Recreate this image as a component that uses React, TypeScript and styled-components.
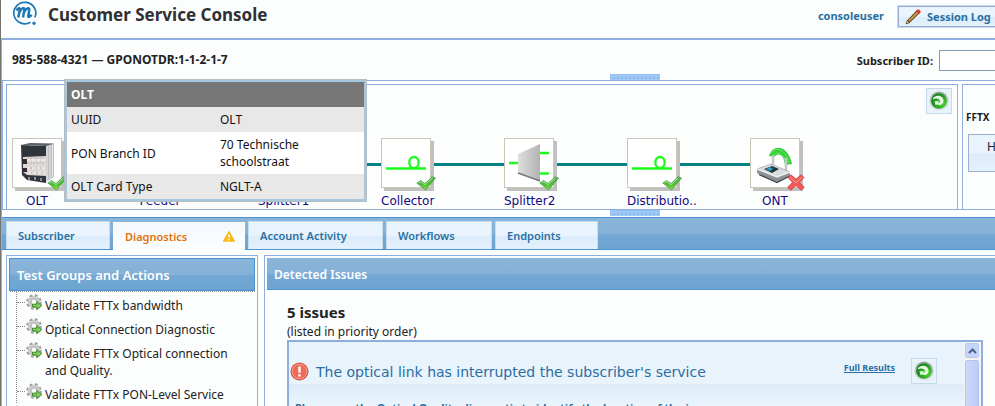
import React, { ReactNode } from "react";
import styled, { createGlobalStyle, css } from "styled-components";

const line = "#8eaee0";
const edge = "#4a94d4";
const ink = "#2a6fa3";
const ui = '"Noto Sans", "Open Sans", sans-serif';
const wide = '"DejaVu Sans", sans-serif';
const barFill = "linear-gradient(#8ab5da 0, #84b1d7 50%, #73a8d3 54%, #6ca3d0 100%)";
const buttonFill = "linear-gradient(#eaf4fd 0, #e8f3fd 50%, #dcecfa 54%, #e4f1fd 100%)";

const Global = createGlobalStyle`
  *, *::before, *::after { box-sizing: border-box; }
  body { margin: 0; overflow: hidden; background: #fcfefe; }
  button, input { font: inherit; }
  h1, h2, h3, p, ul { margin: 0; padding: 0; }
`;

const Page = styled.div`
  display: flex;
  flex-direction: column;
  height: 100vh;
  overflow: hidden;
  border-left: 1px solid #77746f;
  font-family: ${ui};
  font-size: 13px;
  line-height: 17px;
  color: #222;
`;

const Header = styled.header`
  display: flex;
  flex: none;
  align-items: flex-start;
  height: 40px;
  padding-left: 11px;
  border-bottom: 2px solid ${line};
  svg { flex: none; }
`;

const Title = styled.h1`
  flex: 1;
  margin-left: 11px;
  font-size: 17px;
  line-height: 30px;
  color: #303033;
`;

const User = styled.a`
  margin-right: 14px;
  font-size: 11px;
  font-weight: 700;
  line-height: 32px;
  color: ${ink};
  text-decoration: none;
`;

const SessionButton = styled.button`
  display: flex;
  flex: none;
  align-items: center;
  gap: 6px;
  width: 104px;
  height: 21px;
  margin: 6px -7px 0 0;
  padding: 0 6px;
  border: 1px solid #9aa8d0;
  outline: 1px solid #c5dcee;
  background: ${buttonFill};
  font-size: 11px;
  font-weight: 700;
  color: ${ink};
  white-space: nowrap;
`;

const Workspace = styled.div`
  display: flex;
  flex: 1;
  flex-direction: column;
  min-height: 0;
  border-left: 1px solid ${line};
`;

const SubjectBar = styled.div`
  position: relative;
  display: flex;
  flex: none;
  align-items: center;
  height: 41px;
  padding-left: 10px;
  border-bottom: 1px solid ${line};
`;

const Subject = styled.h2`
  flex: 1;
  font-size: 12px;
  line-height: 40px;
`;

const SearchLabel = styled.label`
  display: flex;
  align-items: center;
  gap: 6px;
  margin-right: -6px;
  font-size: 11px;
  font-weight: 700;
`;

const SearchInput = styled.input`
  width: 62px;
  height: 21px;
  border: 1px solid #7f9db9;
  background: #fff;
`;

const Grip = styled.span`
  width: 50px;
  height: 6px;
  background-color: #94c0f6;
  background-image: radial-gradient(#a9d2fb 1px, transparent 1px);
  background-size: 4px 4px;
`;

const TopGrip = styled(Grip)`
  position: absolute;
  bottom: 0;
  left: 608px;
`;

const GripRow = styled.div`
  display: flex;
  flex: none;
  height: 7px;
  padding-left: 608px;
`;

const TopologyRow = styled.div`
  display: grid;
  flex: none;
  grid-template-columns: minmax(0, 1fr) 33px;
  gap: 4px;
  height: 129px;
  padding: 3px 0 0 3px;
  border-left: 1px solid ${line};
  border-bottom: 1px solid ${line};
`;

const Topology = styled.section`
  position: relative;
  padding: 53px 0 0 5px;
  border: 1px solid ${line};
  border-bottom: 0;
`;

const Chain = styled.div`
  display: flex;
  width: 791px;
`;

const Node = styled.figure<{ $last?: boolean }>`
  position: relative;
  flex: ${(p) => (p.$last ? "none" : "1 1 0")};
  width: 53px;
  margin: 0;
  ${(p) =>
    !p.$last &&
    css`
      &::before {
        content: "";
        position: absolute;
        top: 25px;
        right: 0;
        left: 50px;
        height: 3px;
        background: #048284;
      }
    `}
`;

const Tile = styled.div`
  position: relative;
  width: 50px;
  height: 50px;
  border: 1px solid #c9c8b8;
  background: #fff;
  box-shadow: 3px 3px 0 #c0c0c0;
`;

const Badge = styled.span`
  position: absolute;
  right: -6px;
  bottom: -4px;
  display: flex;
`;

const NodeLabel = styled.figcaption<{ $center?: boolean }>`
  width: ${(p) => (p.$center ? "50px" : "auto")};
  margin-top: 4px;
  text-align: ${(p) => (p.$center ? "center" : "left")};
  font-family: ${wide};
  font-size: 12px;
  line-height: 18px;
  color: #14087e;
`;

const IconButton = styled.button`
  display: grid;
  flex: none;
  place-items: center;
  width: 26px;
  height: 26px;
  padding: 0;
  border: 1px solid #c5dbec;
  background: #e8f2fb;
`;

const TopologyRefresh = styled(IconButton)`
  position: absolute;
  top: 3px;
  right: 5px;
`;

const SidePanel = styled.section`
  overflow: hidden;
  padding: 24px 0 0 3px;
  border-top: 1px solid ${line};
  border-left: 1px solid ${line};
  h3 { font-size: 10px; line-height: 16px; }
`;

const SideButton = styled.button`
  width: 60px;
  height: 38px;
  margin: 9px 0 0 2px;
  padding: 0 0 14px 18px;
  border: 1px solid #9fb0cc;
  background: ${buttonFill};
  text-align: left;
  font-size: 12px;
  color: #222;
`;

const Tip = styled.table`
  position: absolute;
  top: -5px;
  left: 58px;
  z-index: 2;
  width: 301px;
  border: 2px solid #a4c8e2;
  outline: 1px solid #b9bcbc;
  border-collapse: separate;
  border-spacing: 0;
  background: #fff;
  font-size: 12px;
  color: #111;
  th, td { height: 25px; padding: 4px; text-align: left; font-weight: 400; }
  thead th { background: #777; font-weight: 700; color: #fff; }
  tbody th { width: 149px; }
  tbody tr:nth-child(odd) { background: #e8e8e8; }
`;

const Tabs = styled.nav`
  display: flex;
  flex: none;
  align-items: flex-end;
  gap: 3px;
  height: 33px;
  padding-left: 4px;
  border-top: 1px solid ${edge};
  border-bottom: 1px solid ${edge};
  background: ${barFill};
`;

const Tab = styled.button<{ $w: number; $active?: boolean }>`
  display: flex;
  align-items: center;
  justify-content: space-between;
  width: ${(p) => p.$w}px;
  height: 28px;
  padding: 0 9px 0 11px;
  border: 1px solid #c5dcec;
  border-bottom: 0;
  background: ${buttonFill};
  font-size: 11px;
  font-weight: 600;
  color: ${ink};
  ${(p) =>
    p.$active &&
    css`
      margin-bottom: -1px;
      border-color: #fcfefe;
      background: linear-gradient(#f3f8fd, #fcfefe);
      color: #e17009;
    `}
`;

const Columns = styled.main`
  display: grid;
  flex: 1;
  grid-template-columns: 252px minmax(0, 1fr);
  gap: 6px;
  min-height: 0;
  padding: 5px 0 0 4px;
`;

const Panel = styled.section`
  display: flex;
  flex-direction: column;
  min-height: 0;
  overflow: hidden;
  padding: 2px;
  border: 1px solid ${line};
  border-bottom: 0;
`;

const IssuesPanel = styled(Panel)`
  padding-right: 0;
  border-right: 0;
`;

const PanelTitle = styled.h2<{ $size: number; $boxed?: boolean }>`
  flex: none;
  height: ${(p) => (p.$boxed ? 33 : 32)}px;
  padding-left: 7px;
  border: ${(p) => (p.$boxed ? 1 : 0)}px solid ${edge};
  border-bottom: 1px solid ${edge};
  background: ${barFill};
  font-size: ${(p) => p.$size}px;
  font-weight: 600;
  line-height: 33px;
  color: #fff;
`;

const Tree = styled.ul`
  position: relative;
  flex: none;
  display: grid;
  gap: 7px;
  margin-left: 7px;
  padding: 6px 14px 0 0;
  list-style: none;
  border-left: 1px dotted #888;
  &::before {
    content: "";
    position: absolute;
    top: 0;
    right: 0;
    left: -7px;
    border-top: 1px dotted #999;
  }
`;

const TreeItem = styled.li`
  display: grid;
  grid-template-columns: 8px 17px 1fr;
  column-gap: 1px;
  &::before {
    content: "";
    margin-top: 5px;
    border-top: 1px dotted #888;
  }
  svg { margin-top: -3px; }
`;

const TreeLink = styled.a`
  padding-left: 1px;
  font-size: 12px;
  color: #222;
  text-decoration: none;
`;

const IssueBody = styled.div`
  display: flex;
  flex: 1;
  flex-direction: column;
  min-height: 0;
  padding: 12px 12px 0 20px;
`;

const IssueCount = styled.h3`
  font-size: 15px;
  line-height: 20px;
`;

const IssueNote = styled.p`
  padding-top: 2px;
  font-size: 12px;
  line-height: 16px;
`;

const IssueBox = styled.div`
  display: flex;
  flex: none;
  height: 160px;
  border: 2px solid ${line};
  background: #e9f3fc;
`;

const IssueMain = styled.div`
  flex: 1;
  min-width: 0;
`;

const IssueHead = styled.div`
  display: flex;
  align-items: flex-end;
  height: 42px;
  padding: 0 27px 0 1px;
  > svg { flex: none; margin-bottom: 3px; }
`;

const IssueText = styled.p`
  flex: 1;
  margin-left: 7px;
  font-family: ${wide};
  font-size: 14px;
  line-height: 24px;
  color: ${ink};
`;

const ResultsLink = styled.a`
  margin: 0 16px 7px 0;
  font-size: 9px;
  font-weight: 700;
  line-height: 18px;
  color: ${ink};
`;

const IssueHelp = styled.p`
  height: 110px;
  padding: 15px 6px 0;
  background: linear-gradient(#dcecf8 0, #e9f4fd 20px);
  font-size: 11px;
  font-weight: 700;
  color: ${ink};
  white-space: nowrap;
`;

const ScrollTrack = styled.div`
  display: flex;
  flex: none;
  flex-direction: column;
  gap: 2px;
  width: 17px;
  padding: 1px 2px 0 1px;
  background: #f5f4ee;
`;

const ScrollUp = styled.button`
  display: grid;
  flex: none;
  place-items: center;
  height: 15px;
  padding: 0;
  border: 1px solid #b8c9f2;
  border-radius: 2px;
  background: #c6d5fd;
`;

const ScrollThumb = styled.span`
  flex: 1;
  border: 1px solid #b3c5ef;
  border-radius: 2px;
  background: linear-gradient(90deg, #cddafe, #bccbf8);
`;

const Logo = () => (
  <svg width="25" height="26" viewBox="0 0 25 26" fill="none" stroke="#1b78b4">
    <path d="M18.500 22.200A11 10.700 0 1 1 22.800 17.500" strokeWidth="1.700" />
    <path d="M4.500 10.500c1.500-2.500 3.800-3.300 3.300-.8L6.300 17.500M7.500 12c2.200-4.500 5.400-5.200 4.800-1.700L11 17.500M12.200 12c2.200-4.500 5.700-5.200 5-1.300l-.9 4.500c-.5 2.600 1.500 2 3.200-.4" strokeWidth="2.500" />
    <circle cx="22" cy="23.300" r="1.400" fill="#1b78b4" strokeWidth=".6" />
  </svg>
);

const Pencil = () => (
  <svg width="16" height="16" viewBox="0 0 16 16">
    <path d="M1 15l1.500-4L11.500 1.500 14.500 4.200 5 13.500z" fill="#604018" />
    <path d="M3.300 11.300l8.700-8.800L13.500 4 4.700 12.600z" fill="#c99a4c" />
    <path d="M1 15l1.300-3.500 2.200 2.200z" fill="#d8b982" stroke="#513614" strokeWidth=".6" />
    <path d="M11 2l1.500-1.500H14L15.500 2v1.500L14 5z" fill="#dd3333" />
  </svg>
);

const Refresh = () => (
  <svg width="20" height="20" viewBox="0 0 20 20">
    <defs>
      <radialGradient id="refreshFill" cx=".7" cy=".65" r=".7">
        <stop offset="0" stopColor="#4fdc2c" />
        <stop offset="1" stopColor="#11801c" />
      </radialGradient>
      <linearGradient id="refreshRim" x2="0" y2="1">
        <stop offset="0" stopColor="#9aa39f" />
        <stop offset="1" stopColor="#dfe7e2" />
      </linearGradient>
    </defs>
    <circle cx="10" cy="10" r="9.500" fill="url(#refreshRim)" />
    <circle cx="10" cy="10" r="7.800" fill="url(#refreshFill)" />
    <path d="M3.500 8.500C5 3.500 14 3.500 14.500 9.500c.3 4-4 5.500-6.500 3.800l-1.200 1.200-1.300-4.300h4.700L9 11.500c1.300.5 2.500-.4 2-1.800C10.300 7.200 6.500 7 3.500 8.500z" fill="#e6f6e4" />
  </svg>
);

const Check = () => (
  <svg width="20" height="15" viewBox="0 0 20 15">
    <defs>
      <linearGradient id="checkFill" x2="0" y2="1">
        <stop offset="0" stopColor="#5fae63" />
        <stop offset=".55" stopColor="#4dbb32" />
        <stop offset="1" stopColor="#86e03c" />
      </linearGradient>
    </defs>
    <path d="M.8 7L4.500 4.500 9 7.500 16 .8l3.500 1.200L9.500 14z" fill="url(#checkFill)" stroke="#3e9c45" strokeWidth=".7" />
    <path d="M2.500 6.700L4.500 5.600l4.500 3 7.300-6.600" fill="none" stroke="#b9e8ae" strokeWidth=".9" />
  </svg>
);

const Cross = () => (
  <svg width="18" height="17" viewBox="0 0 18 17">
    <path d="M1 3.500L4 .8l5 4.400L14 .8l3 2.700-4.500 4.800 4.800 5-3.200 2.900L9 11.400l-5.200 4.800-3.100-2.900 4.800-5z" fill="#f35a58" stroke="#c93a3a" strokeWidth=".8" />
    <path d="M3 3.500l6 5.200 6-5.200" fill="none" stroke="#ff9a96" />
  </svg>
);

const Rack = () => (
  <svg width="48" height="48" viewBox="0 0 48 48">
    <path d="M31 6l10-1.500V38l-8 5z" fill="#bcc0c4" />
    <path d="M34 7v35M37 6v34M39.500 6v32" stroke="#e9ebed" />
    <path d="M8 6l25 1v37l-19-3-5-5z" fill="#30353b" />
    <path d="M8 6l9-2 24 .5L33 7z" fill="#5c6269" />
    <path d="M10 18l23-1v20l-19-1-4-3z" fill="#ded9d5" />
    <path d="M15 18v17M18 18v17M21 18v17M24 18v17M27 18v18M30 18v18" stroke="#b8aeaa" strokeDasharray="2 3" />
    <path d="M14 21h18M14 29h18M15 34h17" stroke="#fff" strokeDasharray="3 2" />
    <path d="M10 20h4v5h-4zM10 29h4v4h-4z" fill="#3a2730" />
    <path d="M16 38v3M22 38v3M28 39v3" stroke="#8a9097" strokeWidth="2" />
  </svg>
);

const Fiber = () => (
  <svg width="48" height="48" viewBox="0 0 48 48" fill="none" stroke="#1dfb1d">
    <path d="M4 29.500h40" strokeWidth="2.500" />
    <ellipse cx="32" cy="23.500" rx="4.700" ry="5.500" strokeWidth="2.300" />
  </svg>
);

const Splitter = () => (
  <svg width="48" height="48" viewBox="0 0 48 48">
    <defs>
      <linearGradient id="prism">
        <stop offset="0" stopColor="#dedede" />
        <stop offset="1" stopColor="#b3b3b3" />
      </linearGradient>
    </defs>
    <path d="M4 24h9M35 14h9M35 34.500h9" stroke="#1dfb1d" strokeWidth="2.500" />
    <path d="M13 15L35 5v37L13 34z" fill="url(#prism)" />
    <path d="M13 34l22 8" stroke="#777" strokeWidth="1.500" />
  </svg>
);

const Router = () => (
  <svg width="48" height="48" viewBox="0 0 48 48">
    <path d="M18 17C22 4 37 6 41 25l-7 1C33 15 27 13 23 18z" fill="#2fce35" />
    <path d="M20 15c5-9 15-4 18 9M22 17c4-6 11-3 13 7" fill="none" stroke="#7de873" />
    <path d="M22 16v14M35 19v13" stroke="#c4c8cb" strokeWidth="2.500" />
    <path d="M6 30l14-5 19 8-12 9-20-8z" fill="#d9dde0" stroke="#9b9fa3" strokeWidth=".7" />
    <path d="M6 30v4l20 9 13-6v-4l-12 5z" fill="#8b9195" />
    <path d="M6 30l20 8 13-5" fill="none" stroke="#eceeef" strokeWidth="1.500" />
    <path d="M13 30l8-3 7 3-7 4z" fill="#25343f" />
    <path d="M15 30l4-2 3 2-3 2z" fill="#29a4c9" />
    <path d="M8 35.500l18 8 12-6" fill="none" stroke="#3c4145" strokeWidth="1.300" />
  </svg>
);

const Gear = () => (
  <svg width="17" height="17" viewBox="0 0 17 17">
    <circle cx="8" cy="8" r="6.500" fill="none" stroke="#9d9d9d" strokeWidth="2.600" strokeDasharray="2.700 2.405" />
    <circle cx="8" cy="8" r="4.200" fill="none" stroke="#c2c2c2" strokeWidth="4" />
    <circle cx="8" cy="8" r="5" fill="none" stroke="#d6d6d6" />
    <path d="M6.500 10.200h4.300V7.600l5 4-5 4.200v-2.700H6.500z" fill="#82ca60" stroke="#3f8a2c" />
  </svg>
);

const Warning = () => (
  <svg width="12" height="11" viewBox="0 0 12 11">
    <path d="M6 .8L11.300 10H.7z" fill="#fdb813" stroke="#fdb813" strokeWidth="1.400" strokeLinejoin="round" />
    <path d="M6 3.500v3.200M6 8v1.400" stroke="#fff" strokeWidth="1.500" />
  </svg>
);

const Alert = () => (
  <svg width="19" height="19" viewBox="0 0 19 19">
    <circle cx="9.500" cy="9.500" r="9" fill="#d9533f" />
    <circle cx="9.500" cy="9.500" r="7.300" fill="#ee6a54" stroke="#f7a797" />
    <path d="M9.500 4.500v6.200M9.500 12.200v2.300" stroke="#fff" strokeWidth="2.400" />
  </svg>
);

type NodeSpec = { label: string; icon: ReactNode; failed?: boolean; center?: boolean };

const nodes: NodeSpec[] = [
  { label: "OLT", icon: <Rack />, center: true },
  { label: "Feeder", icon: <Fiber />, center: true },
  { label: "Splitter1", icon: <Splitter /> },
  { label: "Collector", icon: <Fiber /> },
  { label: "Splitter2", icon: <Splitter /> },
  { label: "Distributio..", icon: <Fiber /> },
  { label: "ONT", icon: <Router />, failed: true, center: true },
];

const tipRows = [
  ["UUID", "OLT"],
  ["PON Branch ID", "70 Technische schoolstraat"],
  ["OLT Card Type", "NGLT-A"],
];

const tabs = [
  { label: "Subscriber", width: 104 },
  { label: "Diagnostics", width: 132, active: true },
  { label: "Account Activity", width: 135 },
  { label: "Workflows", width: 106 },
  { label: "Endpoints", width: 103 },
];

const actions = [
  "Validate FTTx bandwidth",
  "Optical Connection Diagnostic",
  "Validate FTTx Optical connection and Quality.",
  "Validate FTTx PON-Level Service",
];

export default function App() {
  return (
    <>
      <Global />
      <Page>
        <Header>
          <Logo />
          <Title>Customer Service Console</Title>
          <User href="#user">consoleuser</User>
          <SessionButton><Pencil />Session Log</SessionButton>
        </Header>
        <Workspace>
          <SubjectBar>
            <Subject>985-588-4321 — GPONOTDR:1-1-2-1-7</Subject>
            <SearchLabel>Subscriber ID:<SearchInput type="text" /></SearchLabel>
            <TopGrip />
          </SubjectBar>
          <TopologyRow>
            <Topology>
              <Chain>
                {nodes.map((n, i) => (
                  <Node key={n.label} $last={i === nodes.length - 1}>
                    <Tile>{n.icon}<Badge>{n.failed ? <Cross /> : <Check />}</Badge></Tile>
                    <NodeLabel $center={n.center}>{n.label}</NodeLabel>
                  </Node>
                ))}
              </Chain>
              <TopologyRefresh aria-label="Refresh topology"><Refresh /></TopologyRefresh>
              <Tip>
                <thead><tr><th colSpan={2}>OLT</th></tr></thead>
                <tbody>
                  {tipRows.map(([name, value]) => (
                    <tr key={name}><th scope="row">{name}</th><td>{value}</td></tr>
                  ))}
                </tbody>
              </Tip>
            </Topology>
            <SidePanel>
              <h3>FFTX</h3>
              <SideButton>H</SideButton>
            </SidePanel>
          </TopologyRow>
          <GripRow><Grip /></GripRow>
          <Tabs>
            {tabs.map((t) => (
              <Tab key={t.label} $w={t.width} $active={t.active}>
                {t.label}{t.active && <Warning />}
              </Tab>
            ))}
          </Tabs>
          <Columns>
            <Panel>
              <PanelTitle $size={13} $boxed>Test Groups and Actions</PanelTitle>
              <Tree>
                {actions.map((a) => (
                  <TreeItem key={a}><Gear /><TreeLink href="#run">{a}</TreeLink></TreeItem>
                ))}
              </Tree>
            </Panel>
            <IssuesPanel>
              <PanelTitle $size={12}>Detected Issues</PanelTitle>
              <IssueBody>
                <IssueCount>5 issues</IssueCount>
                <IssueNote>(listed in priority order)</IssueNote>
                <IssueBox>
                  <IssueMain>
                    <IssueHead>
                      <Alert />
                      <IssueText>The optical link has interrupted the subscriber's service</IssueText>
                      <ResultsLink href="#results">Full Results</ResultsLink>
                      <IconButton aria-label="Run again"><Refresh /></IconButton>
                    </IssueHead>
                    <IssueHelp>Please run the Optical Quality diagnostic to identify the location of the issue.</IssueHelp>
                  </IssueMain>
                  <ScrollTrack>
                    <ScrollUp aria-label="Scroll up">
                      <svg width="9" height="6" viewBox="0 0 9 6"><path d="M1 5l3.500-3.500L8 5" fill="none" stroke="#4d6185" strokeWidth="2" /></svg>
                    </ScrollUp>
                    <ScrollThumb />
                  </ScrollTrack>
                </IssueBox>
              </IssueBody>
            </IssuesPanel>
          </Columns>
        </Workspace>
      </Page>
    </>
  );
}
